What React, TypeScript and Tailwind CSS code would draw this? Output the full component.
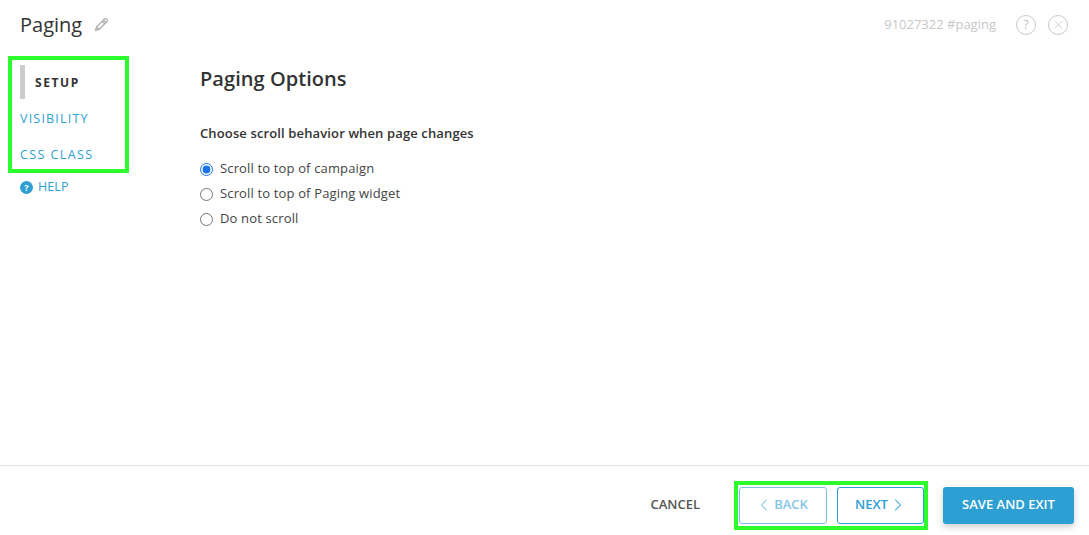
import { useState } from "react";
import { ChevronLeft, ChevronRight, X } from "lucide-react";

const options = ["Scroll to top of campaign", "Scroll to top of Paging widget", "Do not scroll"];

const Pencil = () => (
  <svg width="15" height="15" viewBox="0 0 14 14" fill="none" stroke="#a8a8a8" strokeWidth="1.1">
    <path d="M1.5 12.5l.8-3.2L9.8 1.8a1.2 1.2 0 0 1 1.7 0l.7.7a1.2 1.2 0 0 1 0 1.7L4.7 11.7z" />
    <path d="M8.8 2.8l2.4 2.4M7.6 4l2.4 2.4M2.3 9.3l2.4 2.4" />
  </svg>
);

const App = () => {
  const [choice, setChoice] = useState(0);

  return (
    <div className="h-[535px] w-[1089px] flex flex-col bg-white text-[#333] font-['Open_Sans',sans-serif] overflow-hidden">
      <header className="h-[56px] shrink-0 flex items-center pl-5 pr-[21px] pb-[7px]">
        <h1 className="text-[20px] leading-[27px] text-[#333]">Paging</h1>
        <span className="ml-[12px]"><Pencil /></span>
        <span className="ml-auto text-[13px] text-[#c8c8c8]">91027322 #paging</span>
        <span className="ml-[20px] w-[20px] h-[20px] rounded-full border border-[#c8c8c8] flex items-center justify-center text-[12px] text-[#c0c0c0]">?</span>
        <span className="ml-[12px] w-[20px] h-[20px] rounded-full border border-[#c8c8c8] flex items-center justify-center text-[#b8b8b8]">
          <X size={13} strokeWidth={1.25} />
        </span>
      </header>

      <div className="flex-1 flex">
        <aside className="w-[200px] shrink-0 pl-2">
          <nav className="w-[121px] h-[117px] border-4 border-[#2dfc2d] pl-2 pt-[5px]">
            <div className="h-[34px] border-l-[5px] border-[#cccccc] pl-[10px] flex items-center text-[12px] font-bold tracking-[1.6px] text-[#333] pt-[1px]">SETUP</div>
            <a className="block mt-[11px] text-[12.5px] leading-[18px] tracking-[1.2px] text-[#2d9fd3]">VISIBILITY</a>
            <a className="block mt-[18px] text-[12.5px] leading-[18px] tracking-[1.4px] text-[#2d9fd3]">CSS CLASS</a>
          </nav>
          <a className="mt-[5px] ml-3 flex items-center gap-[5px] text-[12.5px] leading-[18px] tracking-[0.1px] text-[#2d9fd3]">
            <span className="w-[13px] h-[13px] rounded-full bg-[#2d9fd3] text-white text-[9px] font-bold leading-[13px] text-center">?</span>
            HELP
          </a>
        </aside>

        <main className="flex-1 pt-[9px]">
          <h2 className="text-[20px] leading-[28px] font-semibold text-[#333] tracking-[0.05px]">Paging Options</h2>
          <p className="mt-[31px] text-[13px] leading-[18px] font-semibold text-[#333] tracking-[0.13px]">Choose scroll behavior when page changes</p>
          <div className="mt-[18px] flex flex-col gap-[7px]">
            {options.map((label, i) => (
              <label key={label} className="flex items-center h-[18px] text-[13px] text-[#444] tracking-[0.15px]">
                <input
                  type="radio"
                  name="scroll"
                  checked={choice === i}
                  onChange={() => setChoice(i)}
                  className="w-[13px] h-[13px] m-0 mr-[7px] accent-[#1a73e8]"
                />
                {label}
              </label>
            ))}
          </div>
        </main>
      </div>

      <footer className="h-[70px] shrink-0 border-t border-[#e3e3e3] flex items-center justify-end pl-5 pr-[15px] pt-[9px]">
        <button className="text-[13px] font-semibold text-[#555] mr-[34px]">CANCEL</button>
        <div className="w-[194px] h-[49px] border-4 border-[#2dfc2d] flex items-center justify-center gap-[10px]">
          <button className="w-[88px] h-[37px] border border-[#7cc1e3] rounded-[3px] flex items-center justify-center pr-[3px] text-[13px] font-semibold text-[#85c5e5]">
            <ChevronLeft size={20} strokeWidth={1.25} />
            BACK
          </button>
          <button className="w-[87px] h-[37px] border border-[#2d9fd3] rounded-[3px] flex items-center justify-center pl-[3px] text-[13px] font-semibold text-[#2d9fd3]">
            NEXT
            <ChevronRight size={20} strokeWidth={1.25} />
          </button>
        </div>
        <button className="ml-[15px] w-[131px] h-[37px] rounded-[3px] bg-[#2d9fd3] text-white text-[13px] font-semibold shadow-[0_3px_6px_rgba(0,0,0,0.2)]">SAVE AND EXIT</button>
      </footer>
    </div>
  );
};

export default App;
